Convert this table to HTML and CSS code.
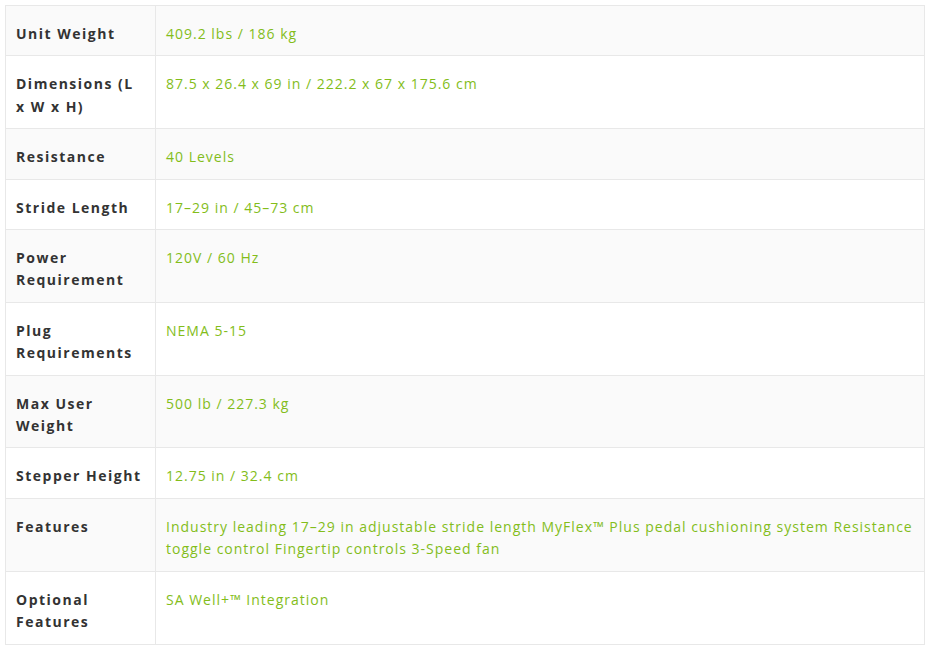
FILE: index.html
```html
<!DOCTYPE html>
<html>
<head>
<meta charset="utf-8">
<link rel="stylesheet" href="styles.css">
</head>
<body>
<table class="specs">
  <tbody>
    <tr><th>Unit Weight</th><td>409.2 lbs / 186 kg</td></tr>
    <tr><th>Dimensions (L x W x H)</th><td>87.5 x 26.4 x 69 in / 222.2 x 67 x 175.6 cm</td></tr>
    <tr><th>Resistance</th><td>40 Levels</td></tr>
    <tr><th>Stride Length</th><td>17–29 in / 45–73 cm</td></tr>
    <tr><th>Power Requirement</th><td>120V / 60 Hz</td></tr>
    <tr><th>Plug Requirements</th><td>NEMA 5-15</td></tr>
    <tr><th>Max User Weight</th><td>500 lb / 227.3 kg</td></tr>
    <tr><th>Stepper Height</th><td>12.75 in / 32.4 cm</td></tr>
    <tr><th>Features</th><td>Industry leading 17–29 in adjustable stride length MyFlex™ Plus pedal cushioning system Resistance toggle control Fingertip controls 3-Speed fan</td></tr>
    <tr><th>Optional Features</th><td>SA Well+™ Integration</td></tr>
  </tbody>
</table>
</body>
</html>
```
FILE: styles.css
```css
html, body {
  margin: 0;
  padding: 0;
  background: #ffffff;
}
body {
  padding: 5px 10px 0 5px;
  font-family: "Open Sans", "Liberation Sans", sans-serif;
  font-size: 14px;
  line-height: 22.4px;
  letter-spacing: 1px;
}
.specs {
  width: 920px;
  border-collapse: collapse;
  border: 1px solid #e8e8e8;
  table-layout: fixed;
}
.specs tr:nth-child(odd) {
  background: #fafafa;
}
.specs tr:nth-child(even) {
  background: #ffffff;
}
.specs th,
.specs td {
  border: 1px solid #e8e8e8;
  padding: 17px 10px 10px 10px;
  vertical-align: top;
  text-align: left;
}
.specs th {
  width: 129px;
  font-weight: 700;
  letter-spacing: 1.5px;
  color: #333333;
}
.specs td {
  font-weight: 400;
  color: #83bd1a;
}
```
